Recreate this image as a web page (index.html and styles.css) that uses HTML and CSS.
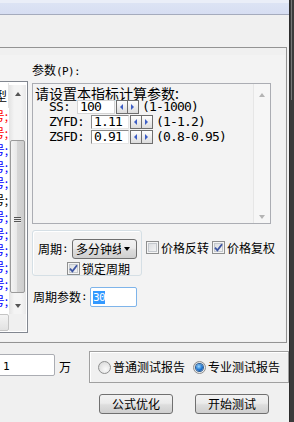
FILE: index.html
```html
<!DOCTYPE html>
<html lang="zh-CN">

<head>
    <meta charset="UTF-8">
    <title>指标测试</title>
    <link rel="stylesheet" href="styles.css">
</head>

<body>
    <div class="window">
        <div class="app">
            <div class="caption"></div>

            <div class="frame">
                <div class="page">
                    <div class="list">
                        <div class="list-main">
                            <div class="items">
                                <div class="head"><span>类型</span></div>
                                <div class="row red"><span>信号;</span></div>
                                <div class="row red"><span>信号;</span></div>
                                <div class="row blue"><span>信号;</span></div>
                                <div class="row blue"><span>信号;</span></div>
                                <div class="row blue"><span>信号;</span></div>
                                <div class="row"><span>信号;</span></div>
                                <div class="row blue"><span>信号;</span></div>
                                <div class="row blue"><span>信号;</span></div>
                                <div class="row blue"><span>信号;</span></div>
                                <div class="row blue"><span>信号;</span></div>
                                <div class="row blue"><span>信号;</span></div>
                                <div class="row blue"><span>信号;</span></div>
                            </div>
                            <div class="vscroll">
                                <div class="sbtn"><span class="tri up"></span></div>
                                <div class="track">
                                    <div class="thumb"><span class="grip"></span></div>
                                </div>
                                <div class="sbtn"><span class="tri down"></span></div>
                            </div>
                        </div>
                        <div class="hbar">
                            <div class="hbtn"></div>
                            <div class="corner"></div>
                        </div>
                    </div>

                    <div class="params">
                        <div class="label">参数<span class="a">(P):</span></div>

                        <div class="memo">
                            <div class="memo-text">
                                <div class="big">请设置本指标计算参数:</div>
                                <div class="pr">
                                    <span class="m">  SS: </span>
                                    <span class="edit plain">100</span>
                                    <span class="spin"><i class="l"></i><i class="r"></i></span>
                                    <span class="m after">(1-1000)</span>
                                </div>
                                <div class="pr">
                                    <span class="m">  ZYFD: </span>
                                    <span class="edit">1.11</span>
                                    <span class="spin"><i class="l"></i><i class="r"></i></span>
                                    <span class="m after">(1-1.2)</span>
                                </div>
                                <div class="pr">
                                    <span class="m">  ZSFD: </span>
                                    <span class="edit">0.91</span>
                                    <span class="spin"><i class="l"></i><i class="r"></i></span>
                                    <span class="m after">(0.8-0.95)</span>
                                </div>
                            </div>
                            <div class="mscroll">
                                <span class="tri up light"></span>
                                <span class="tri down light"></span>
                            </div>
                        </div>

                        <div class="opts">
                            <div class="cycle">
                                <div class="cycle-row">
                                    周期<span class="a">:</span>
                                    <div class="combo">
                                        <span class="combo-text">多分钟线</span>
                                        <span class="tri down dark"></span>
                                    </div>
                                </div>
                                <label class="check lock">
                                    <span class="box"><svg class="tick" width="9" height="9" viewBox="0 0 9 9"><path d="M1 4.6 3.4 7.4 8 1.2" /></svg></span>
                                    锁定周期
                                </label>
                            </div>
                            <div class="flags">
                                <label class="check">
                                    <span class="box"></span>
                                    价格反转
                                </label>
                                <label class="check">
                                    <span class="box"><svg class="tick" width="9" height="9" viewBox="0 0 9 9"><path d="M1 4.6 3.4 7.4 8 1.2" /></svg></span>
                                    价格复权
                                </label>
                            </div>
                        </div>

                        <div class="cycle-param">
                            周期参数<span class="a">:</span>
                            <span class="num"><span class="sel">30</span></span>
                        </div>
                    </div>
                </div>
            </div>

            <div class="bottom">
                <div class="amount"><span class="a">1</span></div>
                <div class="unit">万</div>
                <div class="report">
                    <label class="radio-item"><span class="radio"></span>普通测试报告</label>
                    <label class="radio-item second"><span class="radio on"></span>专业测试报告</label>
                </div>
            </div>

            <div class="actions">
                <button class="btn">公式优化</button>
                <button class="btn">开始测试</button>
            </div>
        </div>
        <div class="edge"><div class="edge-hi"></div></div>
    </div>
</body>

</html>
```

FILE: styles.css
```css
* {
    box-sizing: border-box;
}

body {
    margin: 0;
    width: 294px;
    height: 422px;
    overflow: hidden;
    background: #f0f0f0;
    font-family: "Noto Sans CJK SC", sans-serif;
    font-size: 12px;
    line-height: 14px;
    color: #000;
}

/* ascii text in 12px rows, 6px per char */
.a {
    font-family: "DejaVu Sans Mono", monospace;
    font-size: 11px;
    letter-spacing: -0.62px;
}

/* ascii text in the memo, 7px per char */
.m {
    font-family: "DejaVu Sans Mono", monospace;
    font-size: 13px;
    letter-spacing: -0.83px;
    white-space: pre;
}

.window {
    display: flex;
    height: 422px;
}

.app {
    width: 289px;
    display: flex;
    flex-direction: column;
}

.edge {
    width: 5px;
    background: #3b3b3b;
    border-left: 1px solid #2c2c2c;
}

.edge-hi {
    margin-left: 1px;
    width: 1px;
    height: 100px;
    background: #777;
}

.caption {
    height: 15px;
    border-bottom: 1px solid #a5abbd;
    background: linear-gradient(#eaeef8 0, #eaeef8 3px, #dce3f4 3px, #d7def2 100%);
}

.frame {
    margin: 32px 0 0 -10px;
    width: 297px;
    height: 296px;
    border: 1px solid #939393;
    padding: 7px 1px 1px 0;
}

.page {
    display: flex;
    height: 100%;
    background: #f3f3f3;
}

/* left list */
.list {
    margin-top: 26px;
    width: 37px;
    height: 252px;
    border: 1px solid #828790;
    padding: 1px;
    background: #fff;
    display: flex;
    flex-direction: column;
}

.list-main {
    flex: 1;
    display: flex;
    min-height: 0;
}

.items {
    flex: 1;
    overflow: hidden;
}

.head,
.row {
    display: flex;
    justify-content: flex-end;
    align-items: center;
    white-space: nowrap;
    padding-right: 1px;
}

.head {
    height: 25px;
    border-right: 1px solid #e5e5e5;
}

.row {
    height: 16.75px;
}

.red {
    color: #f00;
}

.blue {
    color: #00f;
}

.vscroll {
    width: 17px;
    margin-top: 2px;
    display: flex;
    flex-direction: column;
    background: linear-gradient(to right, #e3e3e3, #f4f4f4 30%, #f4f4f4 70%, #e9e9e9);
}

.sbtn {
    height: 17px;
    display: flex;
    align-items: center;
    justify-content: center;
}

.track {
    flex: 1;
    padding: 38px 1px 0;
}

.thumb {
    height: 153px;
    border: 1px solid #9a9a9a;
    border-radius: 2px;
    background: linear-gradient(to right, #f4f4f4, #e6e6e6 50%, #d6d6d6 50%, #cdcdcd);
    display: flex;
    align-items: center;
    justify-content: center;
}

.grip {
    width: 7px;
    height: 6px;
    margin-top: 7px;
    background: repeating-linear-gradient(#555 0 1px, #e8e8e8 1px 2px);
}

.hbar {
    height: 17px;
    display: flex;
}

.hbtn {
    flex: 1;
    border: 1px solid #c4c4c4;
    border-radius: 2px;
    background: linear-gradient(#f4f4f4, #e2e2e2);
}

.corner {
    width: 17px;
    background: #f0f0f0;
}

.tri {
    width: 0;
    height: 0;
    border-left: 3.5px solid transparent;
    border-right: 3.5px solid transparent;
}

.tri.up {
    border-bottom: 4px solid #555;
}

.tri.down {
    border-top: 4px solid #555;
}

.tri.light.up {
    border-bottom-color: #b4b4b4;
}

.tri.light.down {
    border-top-color: #b4b4b4;
}

.tri.dark.down {
    border-top-color: #000;
}

/* right column */
.params {
    margin-left: 4px;
    padding-top: 8px;
    width: 239px;
    display: flex;
    flex-direction: column;
}

.label {
    margin-bottom: 4px;
}

.memo {
    height: 141px;
    border: 1px solid #abadb3;
    display: flex;
}

.memo-text {
    flex: 1;
    padding: 2px 0 0 2px;
}

.big {
    font-size: 14px;
    height: 14px;
    white-space: nowrap;
}

.pr {
    display: flex;
    align-items: center;
    height: 14px;
    margin-bottom: 1px;
}

.edit {
    width: 38px;
    height: 14px;
    background: #fff;
    border: 1px solid;
    border-color: #8b8b8b #e4e4e4 #e4e4e4 #8b8b8b;
    padding-left: 2px;
    display: flex;
    align-items: center;
    font-family: "DejaVu Sans Mono", monospace;
    font-size: 13px;
    letter-spacing: -0.83px;
}

.edit.plain {
    border-color: #d4d4d4;
}

.spin {
    margin-left: 1px;
    width: 23px;
    height: 14px;
    border: 1px solid #6e6e6e;
    background: #6e6e6e;
    display: flex;
    gap: 1px;
}

.spin i {
    flex: 1;
    background: linear-gradient(#fefefe, #dcdcdc);
    display: flex;
    align-items: center;
    justify-content: center;
}

.spin i::after {
    content: "";
    border-top: 3px solid transparent;
    border-bottom: 3px solid transparent;
}

.spin .l::after {
    border-right: 3px solid #3c5dc4;
}

.spin .r::after {
    border-left: 3px solid #3c5dc4;
}

.after {
    margin-left: 3px;
}

.mscroll {
    width: 17px;
    border-left: 1px solid #e6e6e6;
    background: #f6f6f6;
    padding: 9px 0 4px;
    display: flex;
    flex-direction: column;
    justify-content: space-between;
    align-items: center;
}

.opts {
    margin-top: 6px;
    display: flex;
    align-items: flex-start;
}

.cycle {
    flex-shrink: 0;
    width: 110px;
    height: 46px;
    border: 1px solid #d5dfe5;
    border-radius: 3px;
    box-shadow: inset 1px 1px 0 #fff;
    padding: 8px 0 0 5px;
}

.cycle-row {
    display: flex;
    align-items: center;
    height: 20px;
}

.combo {
    margin-left: 4px;
    width: 65px;
    height: 20px;
    border: 1px solid #707070;
    border-radius: 3px;
    background: linear-gradient(#f2f2f2, #ebebeb 45%, #dddddd 55%, #cfcfcf);
    display: flex;
    align-items: center;
    padding-left: 3px;
}

.combo-text {
    width: 45px;
    overflow: hidden;
    white-space: nowrap;
    margin-right: 3px;
}

.check {
    display: flex;
    align-items: center;
    gap: 2px;
    line-height: 13px;
    white-space: nowrap;
}

.lock {
    margin: 3px 0 0 29px;
}

.box {
    flex-shrink: 0;
    width: 13px;
    height: 13px;
    border: 1px solid #8e8f8f;
    background: linear-gradient(135deg, #d7dadd, #f8f8f8);
    box-shadow: inset 0 0 0 1px #f4f4f4, inset 0 0 0 2px #c4c8cd;
    display: flex;
    align-items: center;
    justify-content: center;
}

.tick path {
    fill: none;
    stroke: #3d55a3;
    stroke-width: 1.8;
}

.flags {
    flex-shrink: 0;
    margin: 11px 0 0 4px;
    display: flex;
    gap: 3px;
}

.cycle-param {
    margin-top: 11px;
    height: 20px;
    display: flex;
    align-items: center;
    padding-left: 1px;
}

.num {
    margin-left: 3px;
    width: 47px;
    height: 20px;
    border: 1px solid #7eb4ea;
    border-radius: 2px;
    background: #fff;
    padding-left: 2px;
    display: flex;
    align-items: center;
}

.sel {
    background: #3399ff;
    color: #fff;
    font-family: "DejaVu Sans Mono", monospace;
    font-size: 11px;
    letter-spacing: -0.62px;
    line-height: 13px;
}

/* bottom area */
.bottom {
    margin-top: 8px;
    height: 32px;
    display: flex;
    align-items: flex-start;
}

.amount {
    flex-shrink: 0;
    margin: 3px 0 0 -2px;
    width: 57px;
    height: 22px;
    border: 1px solid #abadb3;
    border-radius: 2px;
    background: #fff;
    padding: 3px 0 0 4px;
}

.unit {
    margin-left: 4px;
    align-self: center;
}

.report {
    flex-shrink: 0;
    margin-left: 18px;
    width: 200px;
    height: 32px;
    border: 1px solid #a0a0a0;
    box-shadow: inset 1px 1px 0 #fff;
    display: flex;
    align-items: center;
    padding-left: 8px;
    white-space: nowrap;
}

.radio-item {
    display: flex;
    align-items: center;
    gap: 2px;
}

.radio-item.second {
    margin-left: 8px;
}

.radio {
    width: 13px;
    height: 13px;
    border: 1px solid #8e8f8f;
    border-radius: 50%;
    background: radial-gradient(circle at 60% 65%, #fafafa, #d4d4d4);
    display: flex;
    align-items: center;
    justify-content: center;
}

.radio.on::after {
    content: "";
    width: 7px;
    height: 7px;
    border-radius: 50%;
    background: radial-gradient(circle at 40% 35%, #9bd8ff, #1b73d0 55%, #0b3f8f);
    box-shadow: 0 0 0 1px #2c5d92;
}

.actions {
    margin: 11px 0 0 99px;
    display: flex;
    gap: 22px;
}

.btn {
    width: 74px;
    height: 20px;
    border: 1px solid #707070;
    border-radius: 3px;
    background: linear-gradient(#f2f2f2, #ebebeb 45%, #dddddd 55%, #cfcfcf);
    font-family: "Noto Sans CJK SC", sans-serif;
    font-size: 12px;
    line-height: 16px;
    padding: 0;
    color: #000;
}
```
